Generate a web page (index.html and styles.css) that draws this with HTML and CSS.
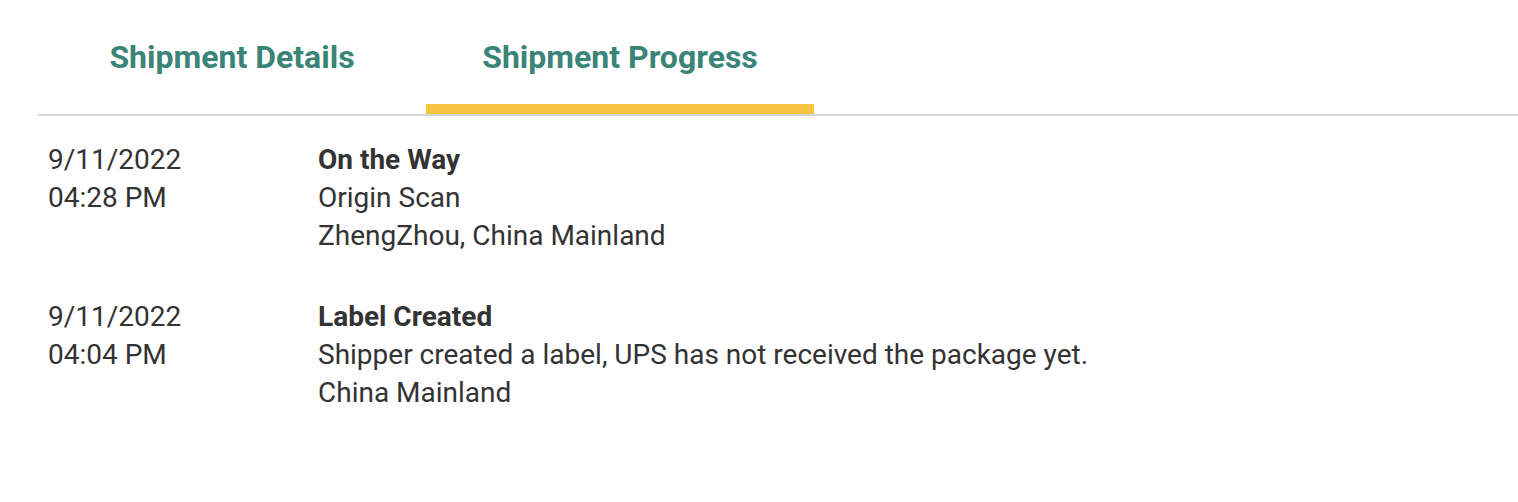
FILE: index.html
```html
<!DOCTYPE html>
<html>
<head>
<meta charset="utf-8">
<link rel="stylesheet" href="styles.css">
</head>
<body>
<div class="page">
  <div class="tabs">
    <div class="tab">Shipment Details</div>
    <div class="tab active">Shipment Progress</div>
  </div>
  <div class="events">
    <div class="event">
      <div class="when">
        <div>9/11/2022</div>
        <div>04:28 PM</div>
      </div>
      <div class="what">
        <div class="status">On the Way</div>
        <div>Origin Scan</div>
        <div>ZhengZhou, China Mainland</div>
      </div>
    </div>
    <div class="event">
      <div class="when">
        <div>9/11/2022</div>
        <div>04:04 PM</div>
      </div>
      <div class="what">
        <div class="status">Label Created</div>
        <div>Shipper created a label, UPS has not received the package yet.</div>
        <div>China Mainland</div>
      </div>
    </div>
  </div>
</div>
</body>
</html>
```
FILE: styles.css
```css
html, body {
  margin: 0;
  padding: 0;
  background: #ffffff;
}
body {
  font-family: Roboto, "Liberation Sans", sans-serif;
  color: #333333;
}
.page {
  padding-left: 38px;
}
.tabs {
  display: flex;
  border-bottom: 2px solid #d6d6d6;
  height: 114px;
  box-sizing: content-box;
}
.tab {
  width: 388px;
  box-sizing: border-box;
  text-align: center;
  font-size: 32px;
  font-weight: 700;
  color: #3a8478;
  padding-top: 37px;
  line-height: 40px;
}
.tab.active {
  border-bottom: 10px solid #f5c443;
}
.events {
  padding-top: 25px;
}
.event {
  display: flex;
  margin-bottom: 43px;
  font-size: 28px;
  line-height: 38px;
}
.when {
  width: 270px;
  padding-left: 10px;
}
.status {
  font-weight: 700;
}
```
